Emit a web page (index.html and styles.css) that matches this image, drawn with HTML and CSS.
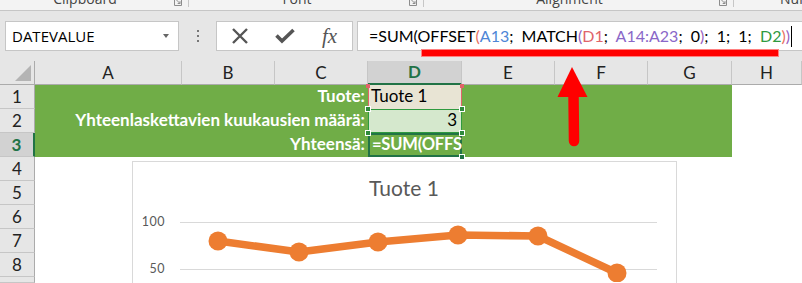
FILE: index.html
```html
<!DOCTYPE html>
<html lang="fi">
<head>
    <meta charset="UTF-8">
    <title>OFFSET + MATCH</title>
    <link rel="stylesheet" href="styles.css">
</head>
<body>
<div class="ribbon">
    <div class="group clip"><span class="glabel">Clipboard</span><span class="launcher"><svg width="8" height="6" viewBox="0 0 8 6"><path d="M0.5 0 V5.5 H7.5 V0 M2.5 0 L6 3.5 M6 1.2 V3.5 H3.7" fill="none" stroke="#8c8c8c" stroke-width="1"/></svg></span><span class="sep"></span></div>
    <div class="group font"><span class="glabel">Font</span><span class="launcher"><svg width="8" height="6" viewBox="0 0 8 6"><path d="M0.5 0 V5.5 H7.5 V0 M2.5 0 L6 3.5 M6 1.2 V3.5 H3.7" fill="none" stroke="#8c8c8c" stroke-width="1"/></svg></span><span class="sep"></span></div>
    <div class="group align"><span class="glabel">Alignment</span><span class="launcher"><svg width="8" height="6" viewBox="0 0 8 6"><path d="M0.5 0 V5.5 H7.5 V0 M2.5 0 L6 3.5 M6 1.2 V3.5 H3.7" fill="none" stroke="#8c8c8c" stroke-width="1"/></svg></span><span class="sep"></span></div>
    <div class="group num"><span class="glabel">Number</span></div>
</div>

<div class="fbar">
    <div class="namebox"><span class="nb-text">DATEVALUE</span><span class="caret"></span></div>
    <div class="grip"><i></i><i></i><i></i></div>
    <div class="fbtns">
        <span class="fbtn"><svg width="18" height="16" viewBox="0 0 18 16"><path d="M2 1 L16 15 M16 1 L2 15" stroke="#555" stroke-width="2.4" fill="none"/></svg></span>
        <span class="fbtn"><svg width="20" height="16" viewBox="0 0 20 16"><path d="M1.5 7.5 L7 13 L18.5 2" stroke="#555" stroke-width="3.6" fill="none"/></svg></span>
        <span class="fbtn fx">fx</span>
    </div>
    <div class="finput"><span class="ftext">=SUM(OFFSET<span class="p-salmon">(</span><span class="r-blue">A13</span>;  MATCH<span class="p-purple">(</span><span class="r-red">D1</span>;  <span class="r-purple">A14:A23</span>;  0<span class="p-purple">)</span>;  1;  1;  <span class="r-green">D2</span><span class="p-salmon">)</span><span class="p-purple">)</span></span><span class="cursor"></span></div>
</div>

<div class="sheet">
    <div class="grid">
        <div class="corner"><span class="tri"></span></div>
        <div class="ch">A</div>
        <div class="ch">B</div>
        <div class="ch">C</div>
        <div class="ch sel">D</div>
        <div class="ch">E</div>
        <div class="ch">F</div>
        <div class="ch">G</div>
        <div class="ch">H</div>

        <div class="rh">1</div>
        <div class="green label">Tuote:</div>
        <div class="dcell d1">Tuote 1<span class="hd red tl"></span><span class="hd red tr"></span></div>
        <div class="green wide"></div>
        <div class="blank"></div>

        <div class="rh">2</div>
        <div class="green label">Yhteenlaskettavien kuukausien määrä:</div>
        <div class="dcell d2">3<span class="hd grn tl"></span><span class="hd grn tr"></span><span class="hd grn bl"></span><span class="hd grn br"></span></div>
        <div class="green wide"></div>
        <div class="blank"></div>

        <div class="rh sel">3</div>
        <div class="green label">Yhteensä:</div>
        <div class="dcell d3"><span class="clipped">=SUM(OFFS</span><span class="hd fill br"></span></div>
        <div class="green wide"></div>
        <div class="blank"></div>

        <div class="rh">4</div><div class="rest"></div>
        <div class="rh">5</div><div class="rest"></div>
        <div class="rh">6</div><div class="rest"></div>
        <div class="rh">7</div><div class="rest"></div>
        <div class="rh">8</div><div class="rest"></div>
        <div class="rh short"></div><div class="rest short"></div>
    </div>

    <div class="chart">
        <svg width="543" height="120" viewBox="0 0 543 120">
            <text class="chart-title" x="271" y="34" text-anchor="middle">Tuote 1</text>
            <line x1="47" y1="60.5" x2="524" y2="60.5" stroke="#d9d9d9"/>
            <line x1="47" y1="107.5" x2="524" y2="107.5" stroke="#d9d9d9"/>
            <text class="axis" x="32" y="64" text-anchor="end">100</text>
            <text class="axis" x="32" y="111" text-anchor="end">50</text>
            <polyline points="85,79 166,90 245,80 325,73 405,74 484,111" fill="none" stroke="#ed7d31" stroke-width="7.5" stroke-linejoin="round"/>
            <g fill="#ed7d31">
                <circle cx="85" cy="79" r="9.5"/>
                <circle cx="166" cy="90" r="9.5"/>
                <circle cx="245" cy="80" r="9.5"/>
                <circle cx="325" cy="73" r="9.5"/>
                <circle cx="405" cy="74" r="9.5"/>
                <circle cx="484" cy="111" r="9.5"/>
            </g>
        </svg>
    </div>
</div>

<svg class="marks" width="802" height="283" viewBox="0 0 802 283">
    <rect x="421.5" y="49.5" width="357" height="7" fill="#ff0000" stroke="#ff8080" stroke-width="1"/>
    <polygon points="572,67 557.5,97 587.5,97" fill="#ff0000"/>
    <path d="M573.5 95 L574 141" stroke="#ff0000" stroke-width="10.5" stroke-linecap="round"/>
</svg>
</body>
</html>
```

FILE: styles.css
```css
* {
    box-sizing: border-box;
}

body {
    margin: 0;
    width: 802px;
    height: 283px;
    overflow: hidden;
    position: relative;
    background: #fff;
    font-family: "Lato", sans-serif;
}

/* ribbon group captions, cut off at the top */
.ribbon {
    display: flex;
    height: 11px;
    background: #f3f3f3;
    border-bottom: 1px solid #c6c6c6;
    overflow: hidden;
}

.group {
    display: flex;
    flex: none;
}

.group.clip {
    width: 189px;
}

.group.font {
    width: 235px;
}

.group.align {
    width: 310px;
}

.group.num {
    flex: 1;
}

.glabel {
    flex: 1;
    text-align: center;
    font-family: "Open Sans", sans-serif;
    font-size: 14px;
    line-height: 14px;
    margin-top: -8px;
    color: #444;
    white-space: nowrap;
}

.num .glabel {
    text-align: left;
    padding-left: 46px;
}

.launcher {
    display: flex;
    width: 8px;
    margin: 0 6px 0 4px;
}

.sep {
    width: 1px;
    height: 7px;
    background: #c6c6c6;
}

/* formula bar */
.fbar {
    display: flex;
    align-items: flex-start;
    height: 50px;
    padding: 10px 0 0 5px;
    background: #e6e6e6;
}

.namebox {
    display: flex;
    align-items: center;
    flex: none;
    width: 174px;
    height: 30px;
    padding-left: 6px;
    background: #fff;
    border: 1px solid #c6c6c6;
}

.nb-text {
    font-family: "Open Sans", sans-serif;
    font-size: 15px;
    line-height: 28px;
    color: #000;
}

.caret {
    margin-left: auto;
    margin-right: 9px;
    border-left: 3.5px solid transparent;
    border-right: 3.5px solid transparent;
    border-top: 4px solid #666;
}

.grip {
    display: flex;
    flex-direction: column;
    align-items: center;
    justify-content: center;
    gap: 3px;
    flex: none;
    width: 37px;
    height: 30px;
}

.grip i {
    width: 2px;
    height: 2px;
    background: #777;
}

.fbtns {
    display: flex;
    flex: none;
    width: 137px;
    height: 30px;
    background: #fff;
    border: 1px solid #c6c6c6;
}

.fbtn {
    display: flex;
    align-items: center;
    justify-content: center;
    width: 45px;
}

.fx {
    font-family: "Liberation Serif", serif;
    font-style: italic;
    font-size: 21px;
    color: #555;
}

.finput {
    display: flex;
    align-items: center;
    flex: none;
    width: 460px;
    height: 30px;
    margin-left: 4px;
    padding-left: 11px;
    background: #fff;
    border: 1px solid #c6c6c6;
}

.ftext {
    font-size: 16px;
    line-height: 28px;
    color: #000;
    white-space: pre;
}

.r-blue { color: #4e86d6; }
.r-red { color: #e0646a; }
.r-purple { color: #8a67c8; }
.r-green { color: #2f9a3f; }
.p-salmon { color: #e8705f; }
.p-purple { color: #9a5fbf; }

.cursor {
    width: 1px;
    height: 21px;
    margin-left: 1px;
    background: #000;
}

/* sheet */
.sheet {
    position: relative;
}

.grid {
    display: grid;
    grid-template-columns: 35px 147px 93px 93px 94px 93px 93px 84px 1fr;
    grid-auto-rows: 24px;
    font-size: 17px;
}

.corner {
    display: flex;
    align-items: flex-end;
    justify-content: flex-end;
    padding: 0 3px 3px 0;
    background: #e6e6e6;
    border-right: 1px solid #ababab;
    border-bottom: 1px solid #ababab;
}

.tri {
    width: 0;
    height: 0;
    border-left: 16px solid transparent;
    border-bottom: 16px solid #b4b4b4;
}

.ch {
    text-align: center;
    line-height: 23px;
    color: #222;
    background: #e6e6e6;
    border-right: 1px solid #c6c6c6;
    border-bottom: 1px solid #ababab;
}

.ch.sel {
    line-height: 22px;
    font-weight: bold;
    color: #217346;
    background: #d2d2d2;
    border-bottom: 2px solid #217346;
}

.rh {
    grid-column: 1;
    text-align: center;
    line-height: 23px;
    color: #222;
    background: #e6e6e6;
    border-right: 1px solid #ababab;
    border-bottom: 1px solid #c6c6c6;
}

.rh.sel {
    font-weight: bold;
    color: #217346;
    background: #d2d2d2;
    border-right: 2px solid #217346;
}

.short {
    height: 6px;
}

.green {
    background: #70ad47;
}

.label {
    grid-column: span 3;
    padding-right: 3px;
    text-align: right;
    line-height: 22px;
    font-weight: bold;
    color: #fff;
    white-space: nowrap;
}

.wide {
    grid-column: span 3;
}

.rest {
    grid-column: 2 / -1;
}

.dcell {
    position: relative;
    line-height: 22px;
    color: #000;
    white-space: nowrap;
}

.d1 {
    padding-left: 3px;
    background: #e8e4d4;
    box-shadow: inset 1px 0 #e0646a, inset -1px 0 #e0646a;
}

.d2 {
    padding-right: 5px;
    text-align: right;
    background: #d5e8cd;
    box-shadow: inset 0 0 0 1px #2f9a3f;
}

.d3 {
    background: #70ad47;
    box-shadow: inset 0 0 0 2px #217346;
}

.clipped {
    display: block;
    height: 100%;
    padding-left: 4px;
    overflow: hidden;
    font-size: 16.5px;
    font-weight: bold;
    letter-spacing: -0.2px;
    color: #fff;
}

/* selection handles */
.hd {
    position: absolute;
    width: 6px;
    height: 6px;
    border: 1px solid #fff;
    z-index: 2;
}

.hd.red { background: #e0646a; }
.hd.grn { background: #2f8a3c; }
.hd.fill { background: #217346; }

.hd.tl { top: -3px; left: -3px; }
.hd.tr { top: -3px; right: -3px; }
.hd.bl { bottom: -3px; left: -3px; }
.hd.br { bottom: -3px; right: -3px; }

.d1 .hd.tl, .d1 .hd.tr {
    top: -1px;
    width: 4px;
    height: 4px;
    border: 0;
}

.d1 .hd.tl { left: -2px; }
.d1 .hd.tr { right: -2px; }

/* floating chart */
.chart {
    position: absolute;
    left: 132px;
    top: 100px;
    width: 545px;
    height: 122px;
    background: #fff;
    border: 1px solid #d9d9d9;
    border-bottom: 0;
    overflow: hidden;
}

.chart-title {
    font-family: "Lato", sans-serif;
    font-size: 21px;
    fill: #595959;
}

.axis {
    font-family: "Lato", sans-serif;
    font-size: 12.5px;
    letter-spacing: 0.5px;
    fill: #595959;
}

.marks {
    position: absolute;
    left: 0;
    top: 0;
    pointer-events: none;
}
```
